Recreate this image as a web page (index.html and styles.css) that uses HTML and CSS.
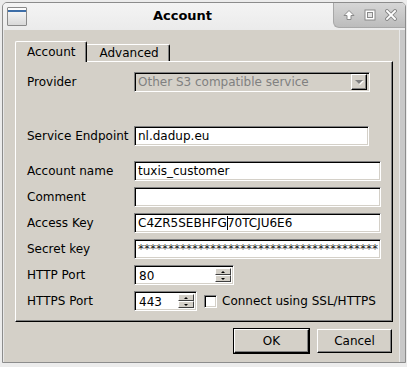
FILE: index.html
```html
<!DOCTYPE html>
<html lang="en">
<head>
    <meta charset="UTF-8">
    <meta name="viewport" content="width=device-width, initial-scale=1.0">
    <title>Account</title>
    <link rel="stylesheet" href="styles.css">
</head>
<body>
    <div class="window">
        <div class="titlebar">
            <div class="app-icon"></div>
            <div class="title">Account</div>
            <div class="wm-buttons">
                <svg width="12" height="12" viewBox="0 0 12 12">
                    <path d="M6 1.5 L11 6.5 L8 6.5 L8 10.5 L4 10.5 L4 6.5 L1 6.5 Z" fill="#fff" stroke="#8a8a8a" stroke-width="1"/>
                </svg>
                <svg width="12" height="12" viewBox="0 0 12 12">
                    <rect x="1" y="1" width="10" height="10" fill="#fff" stroke="#8a8a8a"/>
                    <rect x="3.5" y="3.5" width="5" height="5" fill="#e4e4e4" stroke="#8a8a8a"/>
                </svg>
                <svg width="12" height="12" viewBox="0 0 12 12">
                    <path d="M2 2 L10 10 M10 2 L2 10" stroke="#8a8a8a" stroke-width="3.8" stroke-linecap="square"/>
                    <path d="M2 2 L10 10 M10 2 L2 10" stroke="#fff" stroke-width="1.8" stroke-linecap="square"/>
                </svg>
            </div>
        </div>

        <div class="client">
            <div class="tab-bar">
                <div class="tab active">Account</div>
                <div class="tab">Advanced</div>
            </div>

            <div class="tab-pane">
                <div class="row">
                    <span class="label">Provider</span>
                    <div class="combo disabled">
                        <span class="combo-text">Other S3 compatible service</span>
                        <span class="combo-arrow"><span class="tri-down"></span></span>
                    </div>
                </div>

                <div class="row endpoint">
                    <span class="label">Service Endpoint</span>
                    <div class="field w-mid">nl.dadup.eu</div>
                </div>

                <div class="row after-endpoint">
                    <span class="label">Account name</span>
                    <div class="field w-full">tuxis_customer</div>
                </div>

                <div class="row">
                    <span class="label">Comment</span>
                    <div class="field w-full"></div>
                </div>

                <div class="row">
                    <span class="label">Access Key</span>
                    <div class="field w-full">C4ZR5SEBHFG<span class="caret"></span>70TCJU6E6</div>
                </div>

                <div class="row">
                    <span class="label">Secret key</span>
                    <div class="field w-full secret">****************************************</div>
                </div>

                <div class="row">
                    <span class="label">HTTP Port</span>
                    <div class="spin w-http">
                        <span class="spin-text">80</span>
                        <span class="spin-buttons">
                            <span class="spin-btn"><span class="arr-up"></span></span>
                            <span class="spin-btn"><span class="arr-down"></span></span>
                        </span>
                    </div>
                </div>

                <div class="row">
                    <span class="label">HTTPS Port</span>
                    <div class="spin w-https">
                        <span class="spin-text">443</span>
                        <span class="spin-buttons">
                            <span class="spin-btn"><span class="arr-up"></span></span>
                            <span class="spin-btn"><span class="arr-down"></span></span>
                        </span>
                    </div>
                    <span class="checkbox"></span>
                    <span class="check-label">Connect using SSL/HTTPS</span>
                </div>
            </div>

            <div class="dialog-buttons">
                <button class="btn default">OK</button>
                <button class="btn">Cancel</button>
            </div>
        </div>
    </div>
</body>
</html>
```

FILE: styles.css
```css
* {
    box-sizing: border-box;
    margin: 0;
    padding: 0;
    font-family: "DejaVu Sans", sans-serif;
    font-size: 12px;
}

body {
    background-color: #ececec;
    color: #000;
}

.window {
    margin: 2px 0 0 2px;
    width: 404px;
    border: 1px solid #8c8c8c;
    border-radius: 5px 5px 0 0;
    background-color: #c8c8c8;
    overflow: hidden;
}

/* title bar */

.titlebar {
    display: flex;
    height: 27px;
    background: linear-gradient(#f4f4f4, #ebebeb);
}

.app-icon {
    width: 20px;
    height: 19px;
    margin: 4px 0 0 4px;
    border: 1px solid #8a8a8a;
    border-radius: 1px;
    background: linear-gradient(#fcfcfc, #d9d9d9);
    box-shadow: inset 0 2px 0 #fcfcfc, inset 0 4px 0 #3d6ea8;
}

.title {
    flex: 1;
    text-align: center;
    padding-left: 5px;
    font-size: 13px;
    font-weight: bold;
    line-height: 26px;
}

.wm-buttons {
    display: flex;
    align-items: center;
    gap: 9px;
    width: 72px;
    height: 25px;
    padding-left: 9px;
    background: linear-gradient(#d6d6d6, #bcbcbc);
    border-left: 1px solid #a8a8a8;
    border-bottom: 1px solid #a8a8a8;
    border-bottom-left-radius: 6px;
}

/* client area */

.client {
    width: 397px;
    padding: 11px 6px 9px 11px;
    background-color: #d4d0c8;
    border-left: 1px solid #e8e8e8;
    border-right: 1px solid #e8e8e8;
}

.tab-bar {
    display: flex;
    align-items: flex-end;
}

.tab {
    height: 17px;
    padding: 1px 10px 0 12px;
    line-height: 15px;
    border-top: 1px solid #fff;
    border-right: 1px solid #000;
    border-radius: 0 2px 0 0;
    box-shadow: inset -1px 0 0 #808080;
    background-color: #d4d0c8;
}

.tab.active {
    position: relative;
    z-index: 1;
    height: 21px;
    margin-bottom: -1px;
    padding: 2px 11px 0 11px;
    line-height: 17px;
    border-left: 1px solid #fff;
    border-radius: 2px 2px 0 0;
}

.tab-pane {
    width: 378px;
    padding: 10px 11px 10px 11px;
    border-top: 1px solid #fff;
    border-left: 1px solid #fff;
    border-right: 1px solid #000;
    border-bottom: 1px solid #000;
    box-shadow: inset -1px -1px 0 #808080;
    display: flex;
    flex-direction: column;
    gap: 6px;
}

.row {
    display: flex;
    align-items: center;
    height: 20px;
}

.row.endpoint {
    margin-top: 28px;
}

.row.after-endpoint {
    margin-top: 9px;
}

.label {
    width: 107px;
    flex-shrink: 0;
}

/* sunken widgets */

.field,
.combo,
.spin,
.checkbox {
    border-top: 1px solid #808080;
    border-left: 1px solid #808080;
    border-right: 1px solid #fff;
    border-bottom: 1px solid #fff;
    box-shadow: inset 1px 1px 0 #000, inset -1px -1px 0 #d4d0c8;
    background-color: #fff;
}

.field {
    height: 20px;
    padding: 0 3px;
    line-height: 18px;
    white-space: nowrap;
    overflow: hidden;
}

.w-mid { width: 235px; }
.w-full { width: 247px; }
.w-http { width: 100px; }
.w-https { width: 63px; }

.caret {
    display: inline-block;
    width: 1px;
    height: 14px;
    margin-right: -1px;
    vertical-align: -3px;
    background-color: #000;
}

.secret {
    color: #222;
}

.combo {
    display: flex;
    align-items: center;
    width: 236px;
    height: 20px;
    padding: 2px 2px 2px 3px;
}

.combo.disabled {
    background-color: #d4d0c8;
    color: #808080;
}

.combo-text {
    flex: 1;
    white-space: nowrap;
    overflow: hidden;
}

.combo-arrow {
    display: flex;
    justify-content: center;
    align-items: center;
    width: 16px;
    height: 16px;
    border-top: 1px solid #fff;
    border-left: 1px solid #fff;
    border-right: 1px solid #000;
    border-bottom: 1px solid #000;
    box-shadow: inset -1px -1px 0 #808080;
    background-color: #d4d0c8;
}

.tri-down {
    width: 0;
    height: 0;
    border-left: 4px solid transparent;
    border-right: 4px solid transparent;
    border-top: 4px solid #808080;
    filter: drop-shadow(1px 1px 0 #fff);
}

.spin {
    display: flex;
    height: 20px;
    padding: 2px;
}

.spin-text {
    flex: 1;
    padding-left: 2px;
    line-height: 16px;
}

.spin-buttons {
    display: flex;
    flex-direction: column;
    width: 16px;
}

.spin-btn {
    display: flex;
    justify-content: center;
    align-items: center;
    height: 8px;
    border-top: 1px solid #fff;
    border-left: 1px solid #fff;
    border-right: 1px solid #404040;
    border-bottom: 1px solid #404040;
    background-color: #d4d0c8;
}

.arr-up,
.arr-down {
    width: 0;
    height: 0;
    border-left: 2px solid transparent;
    border-right: 2px solid transparent;
}

.arr-up {
    border-bottom: 2px solid #000;
}

.arr-down {
    border-top: 2px solid #000;
}

.checkbox {
    width: 13px;
    height: 13px;
    margin-left: 7px;
}

.check-label {
    margin-left: 5px;
}

/* dialog buttons */

.dialog-buttons {
    display: flex;
    justify-content: flex-end;
    gap: 8px;
    margin-top: 7px;
    padding-right: 1px;
}

.btn {
    width: 75px;
    height: 24px;
    background-color: #d4d0c8;
    border-top: 1px solid #fff;
    border-left: 1px solid #fff;
    border-right: 1px solid #000;
    border-bottom: 1px solid #000;
    box-shadow: inset -1px -1px 0 #808080;
    color: #000;
}

.btn.default {
    outline: 1px solid #000;
}
```
